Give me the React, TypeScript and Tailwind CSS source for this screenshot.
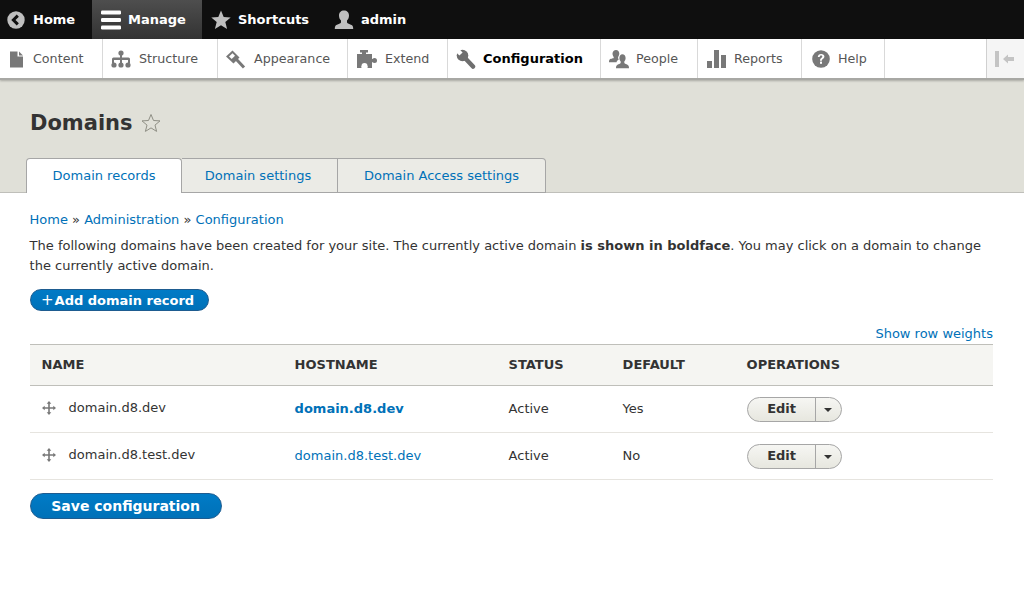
import type { ReactNode } from "react";

const font = { fontFamily: '"DejaVu Sans", sans-serif' };

const HomeIcon = () => (
  <svg width="18" height="18" viewBox="0 0 18 18">
    <circle cx="9" cy="9" r="8.7" fill="#bfbfbf" />
    <path d="M10.8 4.6 6.4 9l4.4 4.4" fill="none" stroke="#0f0f0f" strokeWidth="3" />
  </svg>
);

const MenuIcon = () => (
  <svg width="20" height="20" viewBox="0 0 20 20" fill="#fff">
    <rect x="0" y="0.5" width="20" height="4" rx="1.2" />
    <rect x="0" y="8" width="20" height="4" rx="1.2" />
    <rect x="0" y="15.5" width="20" height="4" rx="1.2" />
  </svg>
);

const StarIcon = () => (
  <svg width="20" height="20" viewBox="0 0 20 20" fill="#bfbfbf">
    <path d="M10 0.5l2.7 6.5 7 .5-5.400 4.500 1.800 7L10 15.200 3.900 19l1.800-7L.3 7.500l7-.5z" />
  </svg>
);

const UserIcon = () => (
  <svg width="20" height="20" viewBox="0 0 20 20" fill="#bfbfbf">
    <path d="M10 0.500c3 0 5 2 5 5 0 2.200-.8 3.900-2 5.100v1.700c0 1.500 3.800 1.900 5.300 3.300.7.700.9 2 .9 3.400H.800c0-1.400.2-2.700.9-3.400C3.200 14.200 7 13.800 7 12.300v-1.700C5.800 9.400 5 7.700 5 5.500c0-3 2-5 5-5z" />
  </svg>
);

const ContentIcon = () => (
  <svg width="14" height="17" viewBox="0 0 14 17" fill="#787878">
    <path d="M0 0.500h7.500v5h5.500v11H0z" />
    <path d="M9 .5l4 4H9z" />
  </svg>
);

const StructureIcon = () => (
  <svg width="20" height="18" viewBox="0 0 20 18" fill="#787878">
    <circle cx="10" cy="3" r="2.600" />
    <circle cx="3" cy="15" r="2.600" />
    <circle cx="10" cy="15" r="2.600" />
    <circle cx="17" cy="15" r="2.600" />
    <path d="M9 4h2v3.500h6.500a1.500 1.500 0 0 1 1.500 1.500v4h-2v-3h-6v3H9v-3H3v3H1V9a1.500 1.500 0 0 1 1.500-1.500H9z" />
  </svg>
);

const AppearanceIcon = () => (
  <svg width="20" height="20" viewBox="0 0 20 20">
    <path d="M0 7.500 6.500 1.500 13.500 8.500 7.500 14.500z" fill="#787878" />
    <path d="M3 7.500 6.500 4.300 9 6.800 5.700 10z" fill="#fff" />
    <path d="M10.500 10.500 18 18.500" fill="none" stroke="#787878" strokeWidth="3" />
  </svg>
);

const ExtendIcon = () => (
  <svg width="20" height="20" viewBox="0 0 20 20">
    <g fill="#787878">
      <rect x="0" y="5" width="15" height="14" />
      <rect x="5" y="3" width="4" height="3" />
      <rect x="3" y="1" width="8" height="2.500" />
      <rect x="15" y="10" width="2" height="3" />
      <circle cx="17.500" cy="11.500" r="2.500" />
    </g>
    <circle cx="7.500" cy="17" r="3" fill="#fff" />
    <rect x="4.500" y="17" width="6" height="2" fill="#fff" />
  </svg>
);

const WrenchIcon = () => (
  <svg width="20" height="20" viewBox="0 0 20 20">
    <circle cx="6.500" cy="6.500" r="5.800" fill="#6e6e6e" />
    <path d="M9 9 17 17.500" fill="none" stroke="#6e6e6e" strokeWidth="4.500" strokeLinecap="round" />
    <path d="M-.6 2.600 2.600-.6 6.600 3.400 3.400 6.600z" fill="#fff" />
  </svg>
);

const PeopleIcon = () => (
  <svg width="20" height="20" viewBox="0 0 20 20" fill="#787878">
    <path d="M7 1c2 0 3.300 1.500 3.300 3.600 0 1.300-.5 2.500-1.200 3.300v1.300c0 .5.300.8.800 1-1.400.9-2.200 1.900-2.400 3.100H0c0-1.300.1-2.200.7-2.800C2 9.300 4.700 9.500 4.700 9V7.900C4 7.100 3.500 5.900 3.500 4.600 3.500 2.500 5 1 7 1z" />
    <path d="M13.300 5.300c2 0 3.300 1.500 3.300 3.600 0 1.400-.5 2.700-1.300 3.500v1.400c0 1.100 2.700 1.300 4 2.600.6.600.7 1.700.7 2.900H7c0-1.200.1-2.300.7-2.900 1.300-1.300 4-1.500 4-2.600v-1.400c-.8-.8-1.300-2.100-1.300-3.500 0-2.100 1.300-3.600 2.900-3.600z" />
  </svg>
);

const ReportsIcon = () => (
  <svg width="20" height="18" viewBox="0 0 20 18" fill="#787878">
    <rect x="0" y="11" width="5" height="7" />
    <rect x="7" y="0" width="5" height="18" />
    <rect x="14" y="5" width="5" height="13" />
  </svg>
);

const HelpIcon = () => (
  <svg width="18" height="18" viewBox="0 0 18 18">
    <circle cx="9" cy="9" r="8.800" fill="#787878" />
    <path d="M5.800 6.900C5.900 5 7.200 3.900 9.100 3.900c2 0 3.300 1.100 3.300 2.700 0 1.300-.8 1.900-1.500 2.400-.7.500-1 .8-1 1.700H8c0-1.600.5-2.200 1.300-2.800.6-.4 1-.7 1-1.300 0-.6-.5-1-1.200-1-.8 0-1.300.5-1.400 1.300z" fill="#fff" />
    <rect x="8" y="11.600" width="2" height="2.200" fill="#fff" />
  </svg>
);

const CollapseIcon = () => (
  <svg width="20" height="16" viewBox="0 0 20 16" fill="#c4c4c4">
    <rect x="0" y="0" width="4" height="16" />
    <path d="M8 8l5-4.500V6h6v4h-6v2.500z" />
  </svg>
);

const DragIcon = () => (
  <svg width="14" height="14" viewBox="0 0 14 14" fill="#787878">
    <path d="M7 0 9.300 2.700H7.800v3.500h3.500V4.700L14 7l-2.700 2.300V7.800H7.800v3.500h1.500L7 14l-2.300-2.700h1.500V7.800H2.700v1.500L0 7l2.700-2.300v1.500h3.500V2.700H4.700z" />
  </svg>
);

function TopLink({ icon, label, active, className }: { icon: ReactNode; label: string; active?: boolean; className: string }) {
  return (
    <div className={`flex h-full items-center font-bold text-[13px] text-white ${active ? "bg-gradient-to-b from-[#4e4e4e] to-[#333333]" : ""} ${className}`}>
      {icon}
      <span>{label}</span>
    </div>
  );
}

function TrayLink({ icon, label, className, active }: { icon: ReactNode; label: string; className: string; active?: boolean }) {
  return (
    <div className={`flex h-full shrink-0 items-center border-r border-[#d9d9d9] pt-[1px] ${className} ${active ? "text-[13px] font-bold text-black" : "text-[12.7px] text-[#565656]"}`}>
      <span className="flex w-[20px] shrink-0 justify-center">{icon}</span>
      <span>{label}</span>
    </div>
  );
}

function Tab({ label, active, className }: { label: string; active?: boolean; className: string }) {
  return (
    <div className={`flex h-[35px] items-center justify-center rounded-t-[4px] border border-[#a6a6a6] text-[13px] text-[#0071b8] ${active ? "border-b-0 bg-white" : "bg-[#ebebe6]"} ${className}`}>
      {label}
    </div>
  );
}

function OperationsButton() {
  return (
    <div className="flex h-[25px] w-[95px] overflow-hidden rounded-full border border-[#a6a6a6] bg-gradient-to-b from-[#f6f6f3] to-[#e7e7df] text-[13px] font-bold text-[#333333]">
      <div className="flex flex-1 items-center justify-center border-r border-[#a6a6a6] pl-[1px]">Edit</div>
      <div className="flex w-[25px] items-center justify-center">
        <span className="mt-[1px] h-0 w-0 border-x-[4px] border-t-[4px] border-x-transparent border-t-[#333333]" />
      </div>
    </div>
  );
}

function Row({ name, host, bold, isDefault }: { name: string; host: string; bold?: boolean; isDefault: string }) {
  return (
    <tr className="h-[47px] border-b border-[#e6e4df] text-[13px] text-[#333333]">
      <td className="pl-[12px]">
        <div className="mb-[2px] flex items-center gap-[13px]">
          <DragIcon />
          <span>{name}</span>
        </div>
      </td>
      <td className="pl-[12px]">
        <span className={`text-[#0071b8] ${bold ? "font-bold" : ""}`}>{host}</span>
      </td>
      <td className="pl-[12px]">Active</td>
      <td className="pl-[12px]">{isDefault}</td>
      <td className="pl-[12px]">
        <OperationsButton />
      </td>
    </tr>
  );
}

export default function App() {
  return (
    <div className="h-[589px] w-[1024px] overflow-hidden bg-white" style={font}>
      <div className="flex h-[39px] items-center bg-[#0f0f0f]">
        <TopLink icon={<HomeIcon />} label="Home" className="w-[92px] gap-[8px] pl-[7px]" />
        <TopLink icon={<MenuIcon />} label="Manage" active className="w-[110px] gap-[7px] pl-[9px]" />
        <TopLink icon={<StarIcon />} label="Shortcuts" className="w-[124px] gap-[7px] pl-[9px]" />
        <TopLink icon={<UserIcon />} label="admin" className="gap-[7px] pl-[8px]" />
      </div>

      <div className="relative z-10 flex h-[41px] border-b-[2px] border-[#a8a8a4] bg-white shadow-[0_1px_2px_rgba(0,0,0,0.25)]">
        <TrayLink icon={<ContentIcon />} label="Content" className="w-[103px] gap-[6px] pl-[7px]" />
        <TrayLink icon={<StructureIcon />} label="Structure" className="w-[115px] gap-[8px] pl-[8px]" />
        <TrayLink icon={<AppearanceIcon />} label="Appearance" className="w-[130px] gap-[8px] pl-[8px]" />
        <TrayLink icon={<ExtendIcon />} label="Extend" className="w-[100px] gap-[8px] pl-[9px]" />
        <TrayLink icon={<WrenchIcon />} label="Configuration" className="w-[153px] gap-[7px] pl-[8px]" active />
        <TrayLink icon={<PeopleIcon />} label="People" className="w-[97px] gap-[7px] pl-[8px]" />
        <TrayLink icon={<ReportsIcon />} label="Reports" className="w-[104px] gap-[7px] pl-[9px]" />
        <TrayLink icon={<HelpIcon />} label="Help" className="w-[83px] gap-[7px] pl-[9px]" />
        <div className="ml-auto flex w-[38px] items-center justify-center border-l border-[#d0d0d0] bg-[#f5f5f5] pr-[2px] pt-[1px]">
          <CollapseIcon />
        </div>
      </div>

      <div className="h-[113px] border-b border-[#bfbfba] bg-[#e0e0d8] px-[30px]">
        <div className="flex h-[78px] items-center gap-[8px] pt-[6px]">
          <h1 className="mt-[2px] text-[21px] font-bold leading-none text-[#333333]">Domains</h1>
          <svg width="20" height="20" viewBox="0 0 20 20" className="mt-[1px]">
            <path d="M10 1.500l2.500 6 6.500.4-5 4.200 1.600 6.300L10 14.900l-5.600 3.500L6 12.100l-5-4.200 6.500-.4z" fill="none" stroke="#8e8e84" strokeWidth="1" />
          </svg>
        </div>
        <div className="-ml-[4px] flex">
          <Tab label="Domain records" active className="w-[156px]" />
          <Tab label="Domain settings" className="w-[156px] rounded-tr-none border-l-0 rounded-tl-none pr-[3px]" />
          <Tab label="Domain Access settings" className="w-[208px] rounded-tl-none border-l-0" />
        </div>
      </div>

      <div className="pl-[29.6px] text-[13px] text-[#333333]">
        <div className="mt-[18px] leading-[18px]">
          <span className="text-[#0071b8]">Home</span> » <span className="text-[#0071b8]">Administration</span> » <span className="text-[#0071b8]">Configuration</span>
        </div>
        <p className="mt-[7px] w-[963.4px] leading-[19.5px]">
          The following domains have been created for your site. The currently active domain <b>is shown in boldface</b>. You may click on a domain to change the currently active domain.
        </p>
        <div className="mt-[14px] flex h-[22px] w-[179px] items-center justify-center gap-[1px] rounded-full border border-[#1e5c90] bg-gradient-to-b from-[#007bc6] to-[#0071b8] pr-[3px] pt-[1px] font-bold text-white">
          <span className="text-[15px] font-normal leading-none">+</span>
          <span>Add domain record</span>
        </div>
        <div className="mt-[14px] w-[963.4px] text-right leading-[18px] text-[#0071b8]">Show row weights</div>
        <table className="mt-[1px] w-[963.4px] table-fixed border-collapse">
          <colgroup>
            <col className="w-[253px]" />
            <col className="w-[214px]" />
            <col className="w-[114px]" />
            <col className="w-[124px]" />
            <col />
          </colgroup>
          <thead>
            <tr className="h-[41px] border-y border-[#bfbfba] bg-[#f5f5f2] text-left text-[13px] font-bold uppercase text-[#333333]">
              <th className="pl-[12px]">Name</th>
              <th className="pl-[12px]">Hostname</th>
              <th className="pl-[12px]">Status</th>
              <th className="pl-[12px]">Default</th>
              <th className="pl-[12px]">Operations</th>
            </tr>
          </thead>
          <tbody>
            <Row name="domain.d8.dev" host="domain.d8.dev" bold isDefault="Yes" />
            <Row name="domain.d8.test.dev" host="domain.d8.test.dev" isDefault="No" />
          </tbody>
        </table>
        <div className="mt-[13px] flex h-[26px] w-[192px] items-center justify-center rounded-full border border-[#1e5c90] bg-gradient-to-b from-[#007bc6] to-[#0071b8] text-[14px] font-bold text-white">
          Save configuration
        </div>
      </div>
    </div>
  );
}
